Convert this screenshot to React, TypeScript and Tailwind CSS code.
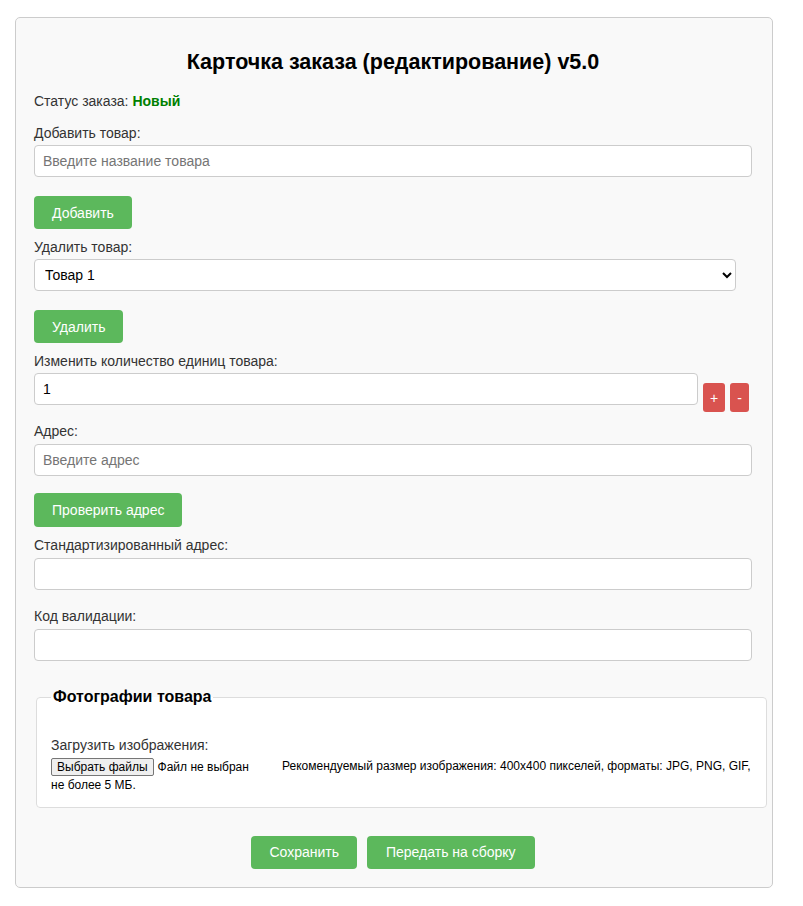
const inputCls =
  "block w-full h-[32px] px-[8px] bg-white border border-[#ccc] rounded-[4px] text-[14px] text-[#333] placeholder:text-[#757575] outline-none";
const greenBtn =
  "h-[33px] px-[18px] bg-[#5cb85c] text-white text-[14px] rounded-[4px] leading-none";
const redBtn =
  "h-[29px] px-[7px] bg-[#d9534f] text-white text-[14px] rounded-[3px] leading-none";

const OrderCard = () => {
  return (
    <div className="font-['Liberation_Sans',Arial,sans-serif] text-[14px] leading-[16px] text-[#333]">
      <div className="mt-[17px] ml-[15px] w-[758px] bg-[#f9f9f9] border border-[#ccc] rounded-[5px] pl-[18px] pr-[20px] pt-[20px] pb-[18px]">
        {/* Заголовок */}
        <h2 className="mt-[12px] text-center text-[21.5px] leading-[24px] font-bold text-black">
          Карточка заказа (редактирование) v5.0
        </h2>

        <div className="mt-[19px]">
          Статус заказа: <span className="font-bold text-[#008000]">Новый</span>
        </div>

        {/* Добавить товар */}
        <div className="mt-[16px]">Добавить товар:</div>
        <input className={`${inputCls} mt-[4px]`} placeholder="Введите название товара" />
        <button className={`${greenBtn} mt-[19px]`}>Добавить</button>

        {/* Удалить товар */}
        <div className="mt-[10px]">Удалить товар:</div>
        <select className="block mt-[4px] w-[702px] h-[32px] pl-[6px] pr-[6px] bg-white border border-[#ccc] rounded-[4px] text-[14px] text-black outline-none">
          <option>Товар 1</option>
          <option>Товар 2</option>
        </select>
        <button className={`${greenBtn} mt-[19px]`}>Удалить</button>

        {/* Количество */}
        <div className="mt-[10px]">Изменить количество единиц товара:</div>
        <div className="mt-[4px] flex items-start">
          <input className={`${inputCls} !w-[664px] text-black`} defaultValue="1" />
          <button className={`${redBtn} mt-[10px] ml-[5px]`}>+</button>
          <button className={`${redBtn} mt-[10px] ml-[5px]`}>-</button>
        </div>

        {/* Адрес */}
        <div className="mt-[11px]">Адрес:</div>
        <input className={`${inputCls} mt-[5px]`} placeholder="Введите адрес" />
        <button className={`${greenBtn} mt-[17px] h-[34px]`}>Проверить адрес</button>

        <div className="mt-[10px]">Стандартизированный адрес:</div>
        <input className={`${inputCls} mt-[5px]`} />

        <div className="mt-[18px]">Код валидации:</div>
        <input className={`${inputCls} mt-[5px]`} />

        {/* Фотографии */}
        <fieldset className="mt-[27px] ml-[2px] w-[731px] bg-white border border-[#ddd] rounded-[4px] px-[14px] pt-[31px] pb-[13px]">
          <legend className="px-[2px] text-[16px] leading-[18px] font-bold text-black">
            Фотографии товара
          </legend>
          <div>Загрузить изображения:</div>
          <div className="mt-[4px] text-[12px] leading-[18px] text-black">
            <span className="inline-flex items-center w-[231px] align-middle">
              <span className="inline-block h-[18px] px-[5px] bg-[#efefef] border border-[#767676] rounded-[2px] text-[12px] leading-[16px]">
                Выбрать файлы
              </span>
              <span className="ml-[4px]">Файл не выбран</span>
            </span>
            Рекомендуемый размер изображения: 400x400 пикселей, форматы: JPG, PNG, GIF, не более 5 МБ.
          </div>
        </fieldset>

        {/* Кнопки */}
        <div className="mt-[28px] flex justify-center gap-[10px]">
          <button className={`${greenBtn} px-[18px]`}>Сохранить</button>
          <button className={`${greenBtn} px-[19px]`}>Передать на сборку</button>
        </div>
      </div>
    </div>
  );
};

export default function App() {
  return <OrderCard />;
}
